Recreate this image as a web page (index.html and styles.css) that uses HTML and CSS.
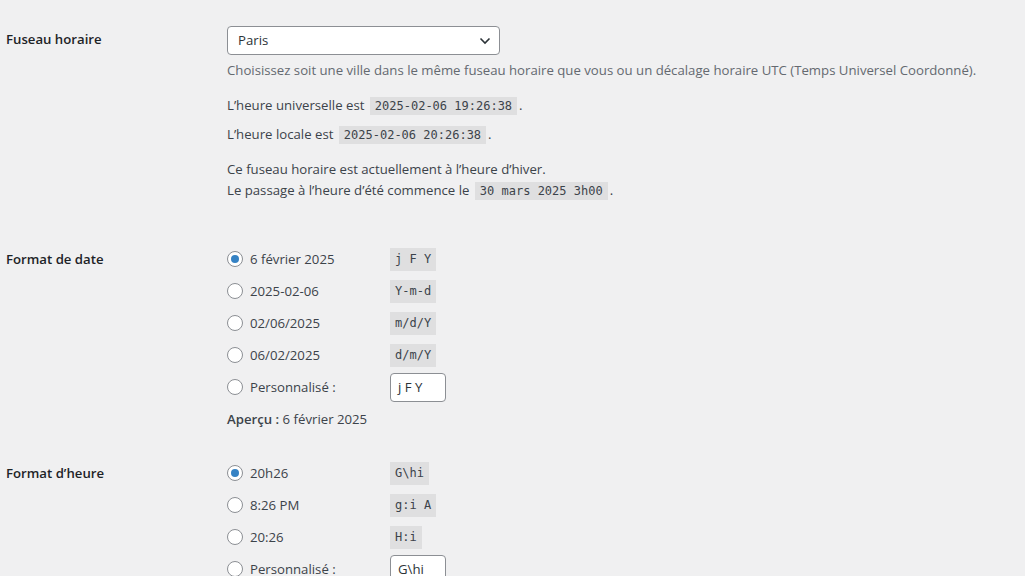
FILE: index.html
```html
<!DOCTYPE html>
<html lang="fr">
<head>
  <meta charset="UTF-8" />
  <title>Réglages généraux</title>
  <link rel="stylesheet" href="styles.css">
</head>
<body>
  <div class="wrap">

    <!-- Fuseau horaire -->
    <div class="form-row row-timezone">
      <div class="row-label">Fuseau horaire</div>
      <div class="row-field">
        <div class="select">
          <span>Paris</span>
          <svg class="chevron" width="12" height="8" viewBox="0 0 12 8">
            <path d="M1.5 1.5 L6 6 L10.5 1.5" fill="none" stroke="#2c3338" stroke-width="1.6"/>
          </svg>
        </div>
        <p class="description">Choisissez soit une ville dans le même fuseau horaire que vous ou un décalage horaire UTC (Temps Universel Coordonné).</p>
        <p class="tz-line first">L’heure universelle est <code>2025-02-06 19:26:38</code>.</p>
        <p class="tz-line">L’heure locale est <code>2025-02-06 20:26:38</code>.</p>
        <p class="tz-line dst">Ce fuseau horaire est actuellement à l’heure d’hiver.<br>
          Le passage à l’heure d’été commence le <code>30 mars 2025 3h00</code>.</p>
      </div>
    </div>

    <!-- Format de date -->
    <div class="form-row">
      <div class="row-label">Format de date</div>
      <div class="row-field">
        <div class="option"><span class="radio checked"></span><span class="opt-text">6 février 2025</span><code>j F Y</code></div>
        <div class="option"><span class="radio"></span><span class="opt-text">2025-02-06</span><code>Y-m-d</code></div>
        <div class="option"><span class="radio"></span><span class="opt-text">02/06/2025</span><code>m/d/Y</code></div>
        <div class="option"><span class="radio"></span><span class="opt-text">06/02/2025</span><code>d/m/Y</code></div>
        <div class="option"><span class="radio"></span><span class="opt-text">Personnalisé :</span><span class="small-input">j F Y</span></div>
        <p class="preview"><strong>Aperçu :</strong> 6 février 2025</p>
      </div>
    </div>

    <!-- Format d'heure -->
    <div class="form-row">
      <div class="row-label">Format d’heure</div>
      <div class="row-field">
        <div class="option"><span class="radio checked"></span><span class="opt-text">20h26</span><code>G\hi</code></div>
        <div class="option"><span class="radio"></span><span class="opt-text">8:26 PM</span><code>g:i A</code></div>
        <div class="option"><span class="radio"></span><span class="opt-text">20:26</span><code>H:i</code></div>
        <div class="option"><span class="radio"></span><span class="opt-text">Personnalisé :</span><span class="small-input">G\hi</span></div>
      </div>
    </div>

  </div>
</body>
</html>
```

FILE: styles.css
```css
* {
  box-sizing: border-box;
}

html, body {
  height: 100%;
}

body {
  margin: 0;
  background: #f0f0f1;
  color: #3c434a;
  font-family: 'Open Sans', 'Noto Sans', sans-serif;
  font-size: 13.2px;
  line-height: 19px;
  overflow: hidden;
}

.wrap {
  padding: 10px 0 0 6px;
}

.form-row {
  display: flex;
  padding-bottom: 14px;
}

.row-timezone {
  padding-bottom: 28px;
}

.row-label {
  width: 221px;
  flex: none;
  padding-top: 20px;
  font-weight: 600;
  color: #1d2327;
}

.row-field {
  padding-top: 13px;
}

.row-timezone .row-field {
  padding-top: 16px;
}

p {
  margin: 0;
  line-height: 21px;
}

code {
  font-family: 'DejaVu Sans Mono', 'Liberation Mono', monospace;
  font-size: 12px;
  background: rgba(0, 0, 0, 0.07);
  padding: 2px 5px 2px;
  margin: 0 2px;
  color: #3c434a;
}

.select {
  width: 273px;
  height: 29px;
  display: flex;
  align-items: center;
  justify-content: space-between;
  padding: 0 8px 0 10px;
  background: #fff;
  border: 1px solid #8c8f94;
  border-radius: 4px;
  color: #2c3338;
}

.description {
  margin-top: 5px;
  color: #646970;
}

.tz-line {
  margin-top: 7px;
}

.tz-line.first {
  margin-top: 14px;
}

.tz-line.dst {
  margin-top: 13px;
}

.option {
  height: 32px;
  display: flex;
  align-items: center;
}

.radio {
  width: 16px;
  height: 16px;
  flex: none;
  border: 1px solid #8c8f94;
  border-radius: 50%;
  background: #fff;
  margin-right: 7px;
  display: flex;
  align-items: center;
  justify-content: center;
}

.radio.checked::before {
  content: "";
  width: 8px;
  height: 8px;
  border-radius: 50%;
  background: #3582c4;
}

.opt-text {
  width: 140px;
  flex: none;
}

.option code {
  margin: 0;
}

.small-input {
  width: 56px;
  height: 29px;
  display: flex;
  align-items: center;
  padding: 0 7px;
  background: #fff;
  border: 1px solid #8c8f94;
  border-radius: 4px;
  color: #2c3338;
}

.preview {
  margin-top: 6px;
}

.preview strong {
  font-weight: 600;
}
```
